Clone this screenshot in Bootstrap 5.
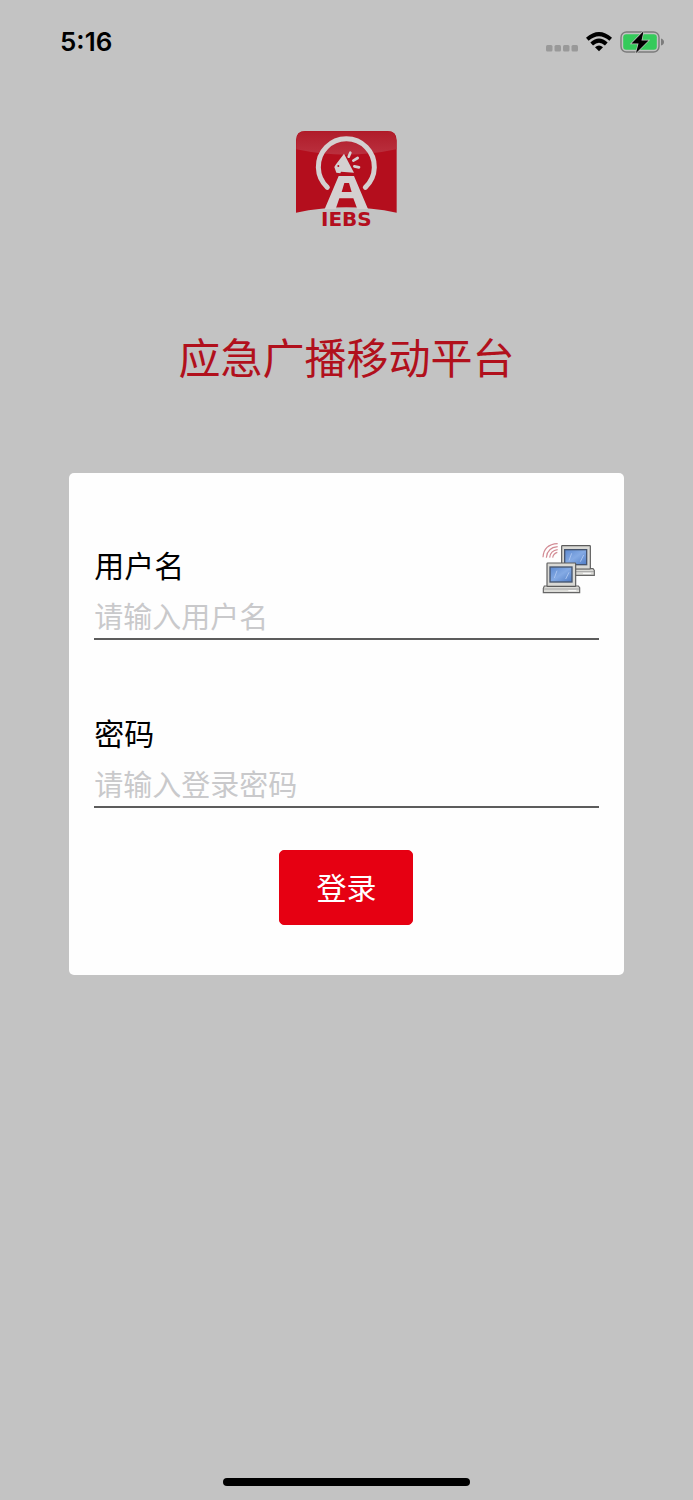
<!DOCTYPE html>
<html lang="zh-CN">
<head>
<meta charset="utf-8">
<meta name="viewport" content="width=device-width, initial-scale=1">
<title>应急广播移动平台</title>
<link href="https://cdn.jsdelivr.net/npm/bootstrap@5.3.0/dist/css/bootstrap.min.css" rel="stylesheet">
<style>
  body { background: #c3c3c3; font-family: "Noto Sans CJK SC", sans-serif; color: #000; }
  .status-bar { height: 84px; padding: 0 29px 0 60px; }
  .clock { font: 600 26px/32px Inter, sans-serif; }
  .brand { margin-top: 47px; }
  .app-title { margin: 93px 0 85px; font-size: 42px; line-height: 64px; font-weight: 400; color: #b1101c; }
  .login-box { width: 80%; padding: 67px 25px 50px; border-radius: 5px; background: #fefefe; }
  .field-head { height: 54px; }
  .field-head label { padding-bottom: 6px; font-size: 30px; line-height: 44px; }
  .field-input { height: 46px; padding: 0 0 3px; border: 0; border-bottom: 2px solid #5c5c5c; border-radius: 0; background: transparent; font-size: 29px; line-height: 40px; }
  .field-input:focus { box-shadow: none; border-color: #e60012; background: transparent; }
  .field-input::placeholder { color: #c9c9cb; font-weight: 400; opacity: 1; }
  .second-field { margin-top: 68px; }
  .server-btn { margin-right: 3px; }
  .login-btn { margin-top: 42px; width: 134px; height: 75px; padding: 4px 0 6px; font-size: 30px; border-radius: 5px;
    --bs-btn-color: #fff; --bs-btn-bg: #e60012; --bs-btn-border-color: #e60012;
    --bs-btn-hover-color: #fff; --bs-btn-hover-bg: #c8000f; --bs-btn-hover-border-color: #c8000f; }
  .home-bar { width: 247px; height: 8px; margin-bottom: 14px; border-radius: 4px; background: #000; }
</style>
</head>
<body>
<div class="min-vh-100 d-flex flex-column align-items-center">
  <header class="status-bar w-100 d-flex align-items-center justify-content-between">
    <span class="clock">5:16</span>
    <div class="d-flex align-items-center gap-2">
      <svg width="32" height="22" viewBox="0 0 32 22" fill="#999" aria-hidden="true">
        <rect y="14" width="6.500" height="6.500" rx="1.500"/><rect x="8.500" y="14" width="6.500" height="6.500" rx="1.500"/><rect x="17" y="14" width="6.500" height="6.500" rx="1.500"/><rect x="25.500" y="14" width="6.500" height="6.500" rx="1.500"/>
      </svg>
      <svg width="26" height="20" viewBox="0 0 26 20" aria-hidden="true">
        <g fill="none" stroke="#000" stroke-width="4"><path d="M1.300 7.200Q13-3 24.700 7.200"/><path d="M5.700 11.900Q13 5.300 20.300 11.900"/></g>
        <path d="M9 15.300Q13 11.800 17 15.300L13 19.300Z"/>
      </svg>
      <svg width="44" height="24" viewBox="0 0 44 24" aria-hidden="true">
        <rect x="1" y="2" width="38" height="20" rx="5.500" fill="none" stroke="#7c7c7c" stroke-width="1.400"/>
        <rect x="3.200" y="4.200" width="33.600" height="15.600" rx="3" fill="#35cb5b"/>
        <path d="M41 8.500Q44 9.500 44 12T41 15.500Z" fill="#7c7c7c"/>
        <path d="M23.500 1.200L11.500 13.500H18.500L16 23L28.500 10.500H21.500Z" fill="#000" stroke="#c3c3c3" stroke-width="1.400" paint-order="stroke"/>
      </svg>
    </div>
  </header>

  <svg class="brand" width="101" height="100" viewBox="30 33 303 300" role="img" aria-label="IEBS">
    <defs>
      <linearGradient id="shine" x1="0" y1="0" x2="0" y2="1"><stop offset="0" stop-color="#b01c2a"/><stop offset="1" stop-color="#ba303e"/></linearGradient>
    </defs>
    <path d="M30 278V61Q30 33 58 33H304Q332 33 332 61V278Q181 245 30 278Z" fill="#b40e1d"/>
    <path d="M31 88V62Q31 34 59 34H303Q331 34 331 62V88Q181 120 31 88Z" fill="url(#shine)"/>
    <path d="M124 202A84 84 0 1 1 238 202" fill="none" stroke="#d4d0d0" stroke-width="15" stroke-linecap="round"/>
    <path d="M158 168H204L246 267H214L202 235H160L149 267H116Z" fill="#d4d0d0"/>
    <path d="M175 189H189L197 216H167Z" fill="#b40e1d"/>
    <path d="M174 101L204 158L165 155L163 160L151 158L145 141L149 134Z" fill="#d4d0d0"/>
    <circle cx="157" cy="138" r="3" fill="#b40e1d"/>
    <path d="M188 110L193 98M202 122L215 114M205 139L219 142" stroke="#d4d0d0" stroke-width="8" stroke-linecap="round"/>
    <text x="181" y="318" text-anchor="middle" font-family="DejaVu Sans, sans-serif" font-weight="700" font-size="60" fill="#b40e1d">IEBS</text>
  </svg>

  <h1 class="app-title text-center">应急广播移动平台</h1>

  <form class="login-box">
    <div class="field-head d-flex align-items-center justify-content-between">
      <label for="username">用户名</label>
      <button type="button" class="server-btn btn p-0 border-0 d-flex" aria-label="服务器设置">
        <svg width="54" height="54" viewBox="0 -8 162 162">
          <defs>
            <linearGradient id="glass" x1="0" y1="0" x2="1" y2="1"><stop offset="0" stop-color="#5c89d0"/><stop offset=".5" stop-color="#84aae4"/><stop offset="1" stop-color="#4f7cc5"/></linearGradient>
            <g id="computer">
              <path d="M4 70H106L110 75V90H1V77Z" fill="#dcdcd8" stroke="#666" stroke-width="3.500"/>
              <path d="M2 79H109" stroke="#888" stroke-width="2"/>
              <path d="M76 84H100" stroke="#fff" stroke-width="3"/>
              <rect x="12" y="1" width="86" height="70" rx="2" fill="#d9d9d5" stroke="#5c5c5c" stroke-width="3.500"/>
              <rect x="21" y="13" width="66" height="45" fill="url(#glass)" stroke="#46546d" stroke-width="4"/>
              <path d="M34 46L42 24M68 49L78 29" stroke="#a9c4f0" stroke-width="3"/>
            </g>
          </defs>
          <g fill="none" stroke="#d28b94" stroke-width="3.500"><path d="M3 44Q5 5 47 3"/><path d="M13 45Q15 15 47 12"/><path d="M23 45Q25 24 47 21"/><path d="M32 45Q34 32 46 29"/></g>
          <use href="#computer" x="47" y="8"/>
          <use href="#computer" x="3" y="60"/>
        </svg>
      </button>
    </div>
    <input class="field-input form-control" id="username" type="text" placeholder="请输入用户名" autocomplete="username">

    <div class="second-field field-head d-flex align-items-center">
      <label for="password">密码</label>
    </div>
    <input class="field-input form-control" id="password" type="password" placeholder="请输入登录密码" autocomplete="current-password">

    <button type="submit" class="login-btn btn d-block mx-auto">登录</button>
  </form>

  <div class="home-bar mt-auto"></div>
</div>
<script src="https://cdn.jsdelivr.net/npm/bootstrap@5.3.0/dist/js/bootstrap.bundle.min.js"></script>
</body>
</html>
